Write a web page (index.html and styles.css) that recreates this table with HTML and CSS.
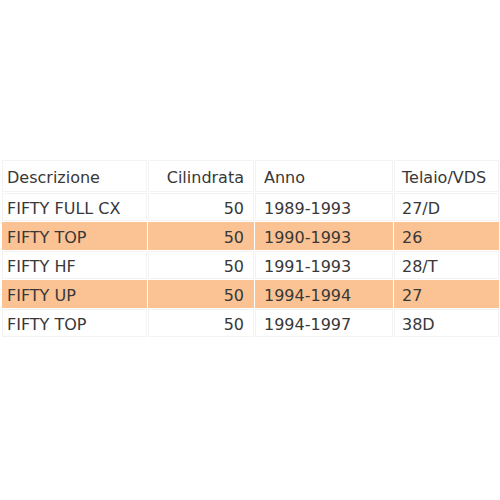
FILE: index.html
```html
<!DOCTYPE html>
<html>
<head>
<meta charset="utf-8">
<link rel="stylesheet" href="styles.css">
</head>
<body>
<table class="grid">
  <thead>
    <tr>
      <th class="c-desc">Descrizione</th>
      <th class="c-cil">Cilindrata</th>
      <th class="c-anno">Anno</th>
      <th class="c-tel">Telaio/VDS</th>
    </tr>
  </thead>
  <tbody>
    <tr><td>FIFTY FULL CX</td><td class="num">50</td><td>1989-1993</td><td>27/D</td></tr>
    <tr class="hl"><td>FIFTY TOP</td><td class="num">50</td><td>1990-1993</td><td>26</td></tr>
    <tr><td>FIFTY HF</td><td class="num">50</td><td>1991-1993</td><td>28/T</td></tr>
    <tr class="hl"><td>FIFTY UP</td><td class="num">50</td><td>1994-1994</td><td>27</td></tr>
    <tr><td>FIFTY TOP</td><td class="num">50</td><td>1994-1997</td><td>38D</td></tr>
  </tbody>
</table>
</body>
</html>
```
FILE: styles.css
```css
html, body {
  margin: 0;
  padding: 0;
  background: #fff;
}
body {
  padding-top: 159px;
  padding-left: 1px;
  overflow: hidden;
}
.grid {
  border-collapse: separate;
  border-spacing: 1px;
  font-family: "DejaVu Sans", sans-serif;
  font-size: 16px;
  color: #383838;
  width: 499px;
  table-layout: fixed;
}
.grid th, .grid td {
  box-sizing: border-box;
  border: 1px solid #f3f3f3;
  font-weight: normal;
  text-align: left;
  white-space: nowrap;
  overflow: hidden;
  padding: 0 7px;
}
.grid th {
  height: 32px;
  padding-top: 2px;
}
.grid td {
  height: 28px;
  padding-top: 2px;
}
.c-desc { width: 145px; }
.c-cil { width: 106px; }
.c-anno { width: 138px; }
.grid th.c-desc, .grid td:first-child { padding-left: 4px; }
.grid th.c-cil, .grid td.num { text-align: right; padding-right: 9px; }
.grid th.c-anno, .grid td:nth-child(3) { padding-left: 8px; }
.hl td {
  background: #fbc394;
  border-color: #fbc394;
}
```
